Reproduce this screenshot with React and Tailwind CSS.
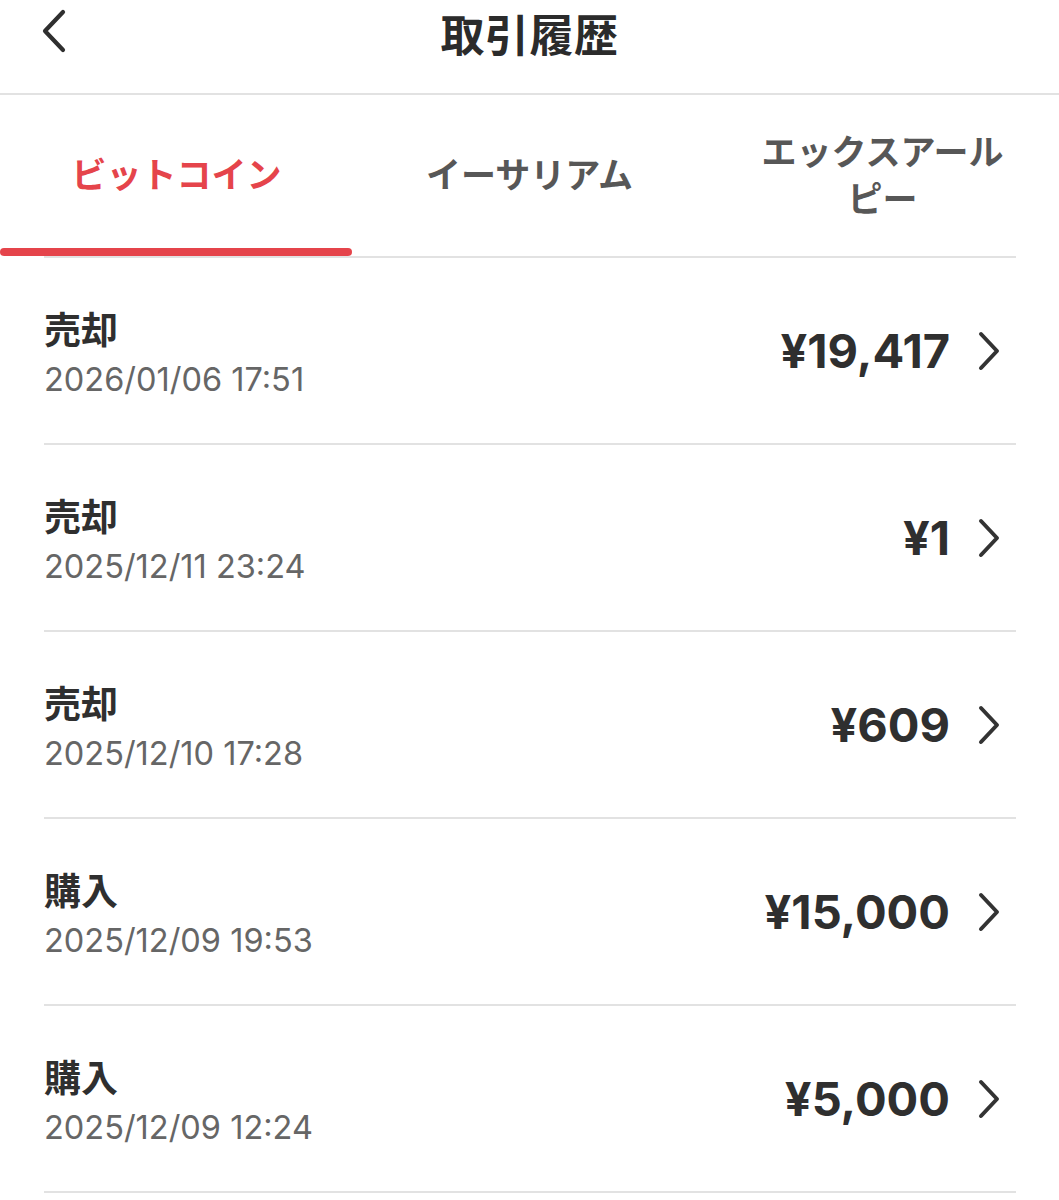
import React from "react";

const rows = [
  { type: "売却", date: "2026/01/06 17:51", amount: "¥19,417" },
  { type: "売却", date: "2025/12/11 23:24", amount: "¥1" },
  { type: "売却", date: "2025/12/10 17:28", amount: "¥609" },
  { type: "購入", date: "2025/12/09 19:53", amount: "¥15,000" },
  { type: "購入", date: "2025/12/09 12:24", amount: "¥5,000" },
];

const jp = { fontFamily: '"Noto Sans CJK JP", "Noto Sans", sans-serif' };
const num = { fontFamily: 'Inter, "Noto Sans CJK JP", sans-serif' };

function ChevronLeft() {
  return (
    <svg width="30" height="48" viewBox="0 0 30 48" fill="none">
      <path d="M25 5 L7 24 L25 43" stroke="#2f2f2f" strokeWidth="4.2" strokeLinecap="round" strokeLinejoin="round" />
    </svg>
  );
}

function ChevronRight() {
  return (
    <svg width="26" height="40" viewBox="0 0 26 40" fill="none">
      <path d="M5 3 L21 20 L5 37" stroke="#333333" strokeWidth="4" strokeLinecap="round" strokeLinejoin="round" />
    </svg>
  );
}

export default function App() {
  return (
    <div className="w-[1059px] min-h-[1200px] bg-white" style={jp}>
      <header className="h-[95px] border-b-2 border-[#e2e2e2]">
        <div className="relative h-[66px] flex items-center justify-center">
          <div className="absolute left-[38px] top-[7px]">
            <ChevronLeft />
          </div>
          <h1 className="text-[44px] font-bold text-[#2b2b2b] leading-none tracking-[0.01em]">取引履歴</h1>
        </div>
      </header>

      <nav className="grid grid-cols-3 h-[161px]">
        <div className="flex flex-col">
          <div className="flex-1 flex items-center justify-center pt-[2px]">
            <span className="text-[35px] font-bold text-[#e5444b] leading-[47px]">ビットコイン</span>
          </div>
          <div className="h-[8px] w-[352px] rounded-full bg-[#e5444b]" />
        </div>
        <div className="flex flex-col">
          <div className="flex-1 flex items-center justify-center pt-[2px]">
            <span className="text-[35px] font-bold text-[#575757] leading-[47px]">イーサリアム</span>
          </div>
          <div className="h-[8px]" />
        </div>
        <div className="flex flex-col">
          <div className="flex-1 flex flex-col items-center justify-center pt-[2px] text-[35px] font-bold text-[#575757] leading-[47px]">
            <span>エックスアール</span>
            <span>ピー</span>
          </div>
          <div className="h-[8px]" />
        </div>
      </nav>

      <div className="mx-[44px] w-[972px]">
        <div className="h-[2px] bg-[#e2e2e2]" />
        {rows.map((r, i) => (
          <div key={i} className="h-[187px] border-b-2 border-[#e2e2e2] flex items-center justify-between">
            <div className="flex flex-col pt-[4px]">
              <span className="text-[37px] font-bold text-[#2f2f2f] leading-[48px]">{r.type}</span>
              <span className="text-[32.5px] text-[#666666] leading-[44px] mt-[6px]" style={num}>{r.date}</span>
            </div>
            <div className="flex items-center gap-[26px] pr-[14px]">
              <span className="text-[47px] font-bold text-[#2f2f2f] leading-none" style={num}>{r.amount}</span>
              <ChevronRight />
            </div>
          </div>
        ))}
      </div>
    </div>
  );
}
